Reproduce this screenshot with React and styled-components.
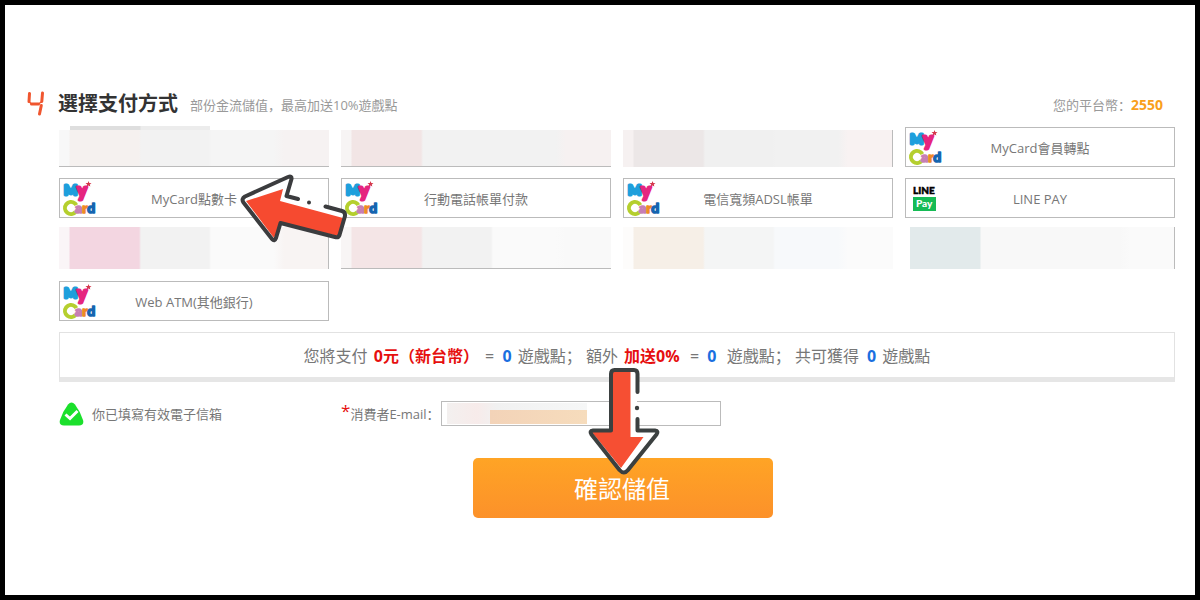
import styled, { createGlobalStyle } from "styled-components";

const GlobalStyle = createGlobalStyle`
  * { box-sizing: border-box; }
  body {
    margin: 0;
    background: #fff;
    font-family: "Open Sans", "Noto Sans CJK SC", sans-serif;
    font-size: 13px;
    color: #777;
  }
  button, input { font-family: inherit; }
`;

const Frame = styled.main`
  min-height: 100vh;
  border: 5px solid #000;
  padding: 84px 20px 40px 22px;
`;

const Header = styled.header`
  display: flex;
  align-items: center;
  height: 30px;
  margin-bottom: 8px;
  color: #999;
  white-space: nowrap;

  h2 {
    margin: 0 12px 0 13px;
    font-size: 20px;
    line-height: 30px;
    font-weight: 700;
    color: #333;
  }
  .balance {
    margin-left: auto;
    padding-right: 12px;
    b { color: #f9a01b; font-size: 14px; }
  }
`;

const Body = styled.div`
  padding-left: 32px;
`;

const Methods = styled.div`
  display: grid;
  grid-template-columns: repeat(4, 1fr);
  gap: 11px 12px;
`;

const Cell = styled.div`
  position: relative;
  height: ${(p) => (p.$tall ? "41px" : "40px")};
`;

const Method = styled.button`
  display: flex;
  align-items: center;
  justify-content: center;
  position: relative;
  width: 100%;
  height: 40px;
  padding: 2px 0 0;
  border: 1px solid #bbb;
  background: #fff;
  color: #777;
  font-size: 13px;
  line-height: 20px;
  cursor: pointer;

  svg {
    position: absolute;
    left: 3px;
    top: 2px;
    overflow: visible;
  }
`;

const Masked = styled.div`
  height: ${(p) => (p.$tall ? "42px" : "37px")};
  margin-top: ${(p) => (p.$tall ? "-2px" : "3px")};
  border-right: ${(p) => (p.$right ? "1px solid #bbb" : "none")};
  border-bottom: ${(p) => (p.$bottom ? "1px solid #bbb" : "none")};
  background: linear-gradient(
    to right,
    ${(p) => p.$c[0]} ${(p) => p.$edge || 10}px,
    ${(p) => p.$c[1]} ${(p) => p.$edge || 11}px ${(p) => (p.$edge ? 75 : 80)}px,
    ${(p) => p.$c[2]} ${(p) => (p.$edge ? 76 : 82)}px 150px,
    ${(p) => p.$c[3]} 152px 215px,
    ${(p) => p.$c[4]} 225px
  );
`;

const Band = styled.div`
  position: absolute;
  left: 11px;
  top: -1px;
  width: 140px;
  height: 4px;
  background: linear-gradient(to right, #dedede 70px, #ececec 71px);
`;

const Summary = styled.div`
  margin-top: 11px;
  border: 1px solid #e2e2e2;
  border-bottom: 5px solid #e6e6e6;
  padding-top: 2px;
  font-size: 16px;
  line-height: 42px;
  text-align: center;
  white-space: pre;

  strong { margin: 0 2px; color: #e60f0f; }
  b { margin: 0 2px 0 4px; color: #1a6fe0; }
`;

const Contact = styled.div`
  display: grid;
  grid-template-columns: repeat(4, 1fr);
  column-gap: 12px;
  align-items: center;
  margin-top: 19px;
`;

const Status = styled.div`
  display: flex;
  align-items: center;
  gap: 8px;
`;

const Email = styled.div`
  grid-column: span 3;
  display: flex;
  align-items: center;
  gap: 1px;

  label { white-space: nowrap; }
  sup {
    color: #e60f0f;
    font-size: 17px;
    line-height: 12px;
    vertical-align: 2px;
  }
`;

const Field = styled.div`
  position: relative;
  width: 280px;
  height: 25px;

  input {
    display: block;
    width: 100%;
    height: 100%;
    border: 1px solid #bbb;
    padding: 0 6px;
  }
`;

const Blur = styled.span`
  position: absolute;
  left: 6px;
  top: 2px;
  width: 140px;
  height: 21px;
  background: linear-gradient(to right, #f3f0ef, #f7ebea 30px, #f1f1f1 50px, #f6f7f7);

  &::after {
    content: "";
    position: absolute;
    left: 43px;
    right: 0;
    bottom: 0;
    height: 14px;
    background: linear-gradient(to right, #f3d3b8, #f6dcbc);
  }
`;

const Actions = styled.div`
  display: flex;
  justify-content: center;
  margin-top: 32px;
  padding-left: 12px;
`;

const SubmitWrap = styled.div`
  position: relative;
`;

const Submit = styled.button`
  width: 300px;
  height: 60px;
  padding: 0 2px 2px 0;
  border: none;
  border-radius: 5px;
  background: linear-gradient(#ffa425, #fc912a);
  color: #fff;
  font-size: 24px;
  cursor: pointer;
`;

const SideArrow = styled.svg`
  position: absolute;
  right: -20px;
  top: -5px;
  z-index: 2;
  pointer-events: none;
`;

const DownArrow = styled.svg`
  position: absolute;
  left: 114px;
  bottom: 42px;
  z-index: 2;
  pointer-events: none;
`;

const Step = () => (
  <svg width="18" height="26" viewBox="0 0 18 26" fill="none" stroke="#f0562f" strokeWidth="3" strokeLinecap="round">
    <path d="M2.500 2.500L2 10.500M4.500 13H11.500M15.500 2L14.800 10.500M14.300 14.500L12.500 23" />
    <path d="M2 10.500L4.500 13M11.500 13L14.800 10.500" strokeWidth="1.500" />
  </svg>
);

const MyCardLogo = () => (
  <svg width="34" height="36" viewBox="0 0 34 36" fontFamily="Lato, sans-serif" fontWeight="900" strokeLinejoin="round">
    <text x="1" y="14" fontSize="14" fill="#1e9fdc" stroke="#1e9fdc" strokeWidth="3">
      M<tspan y="16" fontSize="18" fill="#e5257f" stroke="#e5257f">y</tspan>
    </text>
    <circle cx="8" cy="27" r="6" fill="none" stroke="#b5cf2e" strokeWidth="4" strokeDasharray="30 8" transform="rotate(38 8 27)" />
    <text x="12" y="32" fontSize="14" fill="#c77fb5" stroke="#c77fb5" strokeWidth="1.500">
      a<tspan fill="#f08a24" stroke="#f08a24">r</tspan><tspan fill="#1565b0" stroke="#1565b0">d</tspan>
    </text>
    <path d="M25.500 0L26.300 2L28.500 2.200L26.800 3.600L27.300 5.600L25.500 4.500L23.500 5.600L24.200 3.500L22.500 2L24.800 2Z" fill="#d4364b" />
  </svg>
);

const LinePayLogo = () => (
  <svg width="34" height="36" viewBox="0 0 34 36" fontFamily="Lato, sans-serif" fontWeight="900">
    <text x="4" y="13" fontSize="10" fill="#000" stroke="#000" strokeWidth="0.500">LINE</text>
    <rect x="4" y="16" width="23" height="14" fill="#16bb55" />
    <text x="7" y="26" fontSize="10" fill="#fff">Pay</text>
  </svg>
);

const CheckIcon = () => (
  <svg width="25" height="24" viewBox="0 0 25 24">
    <path d="M9 2.500Q12.500-1.500 16 2.500Q21 9 24 18Q25.500 23.500 20 23.500H5Q-.5 23.500 1 18Q4 9 9 2.500Z" fill="#1be02c" />
    <path d="M6.500 12.500L11 16.500L18.500 9" fill="none" stroke="#fff" strokeWidth="3" />
  </svg>
);

const methods = [
  { c: ["#f8f8f8", "#f5f1ef", "#f2f2f2", "#f5f5f5", "#f6f2f2"], bottom: true, band: true },
  { c: ["#f7f4f4", "#f2e5e5", "#f2f2f2", "#f2f2f2", "#f6f1f1"], bottom: true },
  { c: ["#f6f1f1", "#ece7e7", "#f0f0f0", "#f1f1f1", "#f8f2f2"], right: true },
  { name: "MyCard會員轉點" },
  { name: "MyCard點數卡", arrow: true },
  { name: "行動電話帳單付款" },
  { name: "電信寬頻ADSL帳單" },
  { name: "LINE PAY", line: true },
  { c: ["#faf5f7", "#f3d6e1", "#f2f2f2", "#fafafa", "#f8f4f3"], right: true, tall: true },
  { c: ["#f8f5f5", "#f4e5e6", "#f2f2f2", "#fafafa", "#f9f9f9"], bottom: true, tall: true },
  { c: ["#fdfcfb", "#f6efe7", "#f4f5f5", "#f7f9fb", "#fbfbfb"], tall: true },
  { c: ["#fff", "#e2eaeb", "#f8f8f8", "#f8f8f8", "#fafafa"], right: true, tall: true, edge: 5 },
  { name: "Web ATM(其他銀行)" },
];

const App = () => {
  return (
    <>
      <GlobalStyle />
      <Frame>
        <Header>
          <Step />
          <h2>選擇支付方式</h2>
          <span>部份金流儲值，最高加送10%遊戲點</span>
          <span className="balance">您的平台幣：<b>2550</b></span>
        </Header>
        <Body>
          <Methods>
            {methods.map((m, i) => (
              <Cell key={i} $tall={m.tall}>
                {m.name ? (
                  <Method type="button">
                    {m.line ? <LinePayLogo /> : <MyCardLogo />}
                    {m.name}
                  </Method>
                ) : (
                  <Masked $c={m.c} $right={m.right} $bottom={m.bottom} $tall={m.tall} $edge={m.edge} />
                )}
                {m.band && <Band />}
                {m.arrow && (
                  <SideArrow width="110" height="72" viewBox="239 173 110 72" strokeLinejoin="round" strokeLinecap="round">
                    <path d="M243 199L291 176L286 195L345 212L338 237L281 223L274 240Z" fill="#fff" />
                    <path d="M246 201L283 189L280 201L343 218L338 236L281 223L274 238Z" fill="#f64a30" />
                    <path d="M298 199L286.500 196L291.500 179Q292 175.500 288 177L245 196.500Q241 199 243.500 202.500L272 239Q274.500 242 276 238L280.500 223L335 237Q338.500 238 339.500 235L345 216Q345.500 212 342 211L325.500 206.500" fill="none" stroke="#3b3c3e" strokeWidth="4" />
                    <circle cx="309" cy="202.500" r="2" fill="#3b3c3e" />
                  </SideArrow>
                )}
              </Cell>
            ))}
          </Methods>

          <Summary>
            您將支付 <strong>0元（新台幣）</strong> = <b>0</b> 遊戲點； 額外 <strong>加送0%</strong>{"  "}= <b>0</b>{"  "}遊戲點； 共可獲得 <b>0</b> 遊戲點
          </Summary>

          <Contact>
            <Status>
              <CheckIcon />
              你已填寫有效電子信箱
            </Status>
            <Email>
              <label htmlFor="email"><sup>*</sup>消費者E-mail：</label>
              <Field>
                <input id="email" type="email" />
                <Blur />
              </Field>
            </Email>
          </Contact>

          <Actions>
            <SubmitWrap>
              <Submit type="button">確認儲值</Submit>
              <DownArrow width="74" height="110" viewBox="587 366 74 110" strokeLinejoin="round" strokeLinecap="round">
                <path d="M611 370H637V430H658L624 473L590 431H611Z" fill="#fff" />
                <path d="M611 371H630.500V437H643.500L621 468L591 431H611Z" fill="#f64f33" />
                <path d="M637.500 392V374Q637.500 370 634 370H614.500Q611 370 611 374V430.500H593Q589 431 591.500 434.500L619.500 470Q624 475 628 470L656.500 434.500Q659 431 655 430.500H637.500V419" fill="none" stroke="#3b4040" strokeWidth="4" />
                <circle cx="637" cy="408" r="2.200" fill="#3b4040" />
              </DownArrow>
            </SubmitWrap>
          </Actions>
        </Body>
      </Frame>
    </>
  );
};

export default App;
